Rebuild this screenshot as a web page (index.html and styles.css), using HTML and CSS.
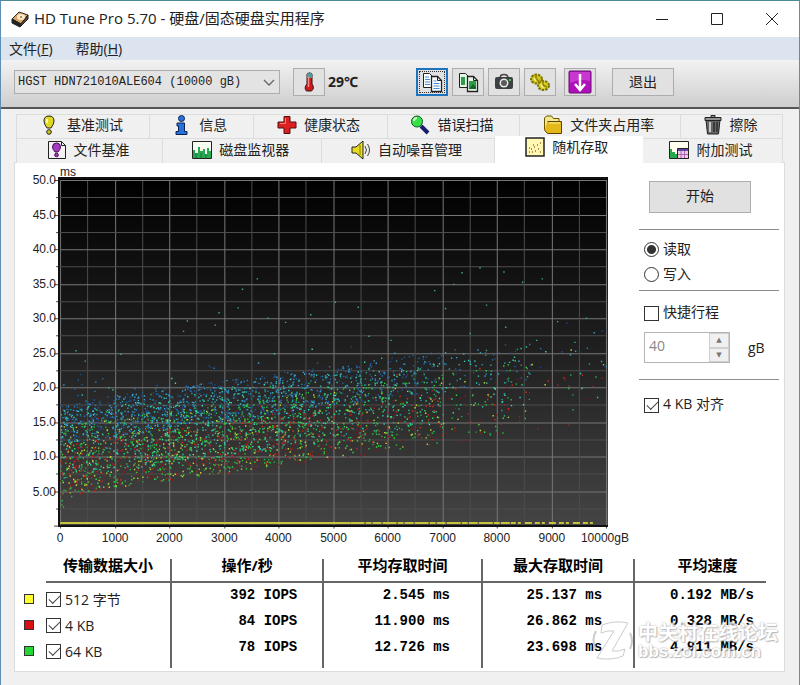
FILE: index.html
```html
<!DOCTYPE html>
<html lang="zh-CN">
<head>
    <meta charset="UTF-8">
    <meta name="viewport" content="width=device-width, initial-scale=1.0">
    <title>HD Tune Pro 5.70</title>
    <link rel="stylesheet" href="styles.css">
</head>
<body>

<div class="window">
    <header class="title-bar">
        <svg class="app-icon" viewBox="0 0 18 18" width="18" height="18">
            <path d="M1 9 8 2l9 3-7 9z" fill="#d9a868" stroke="#3a2a20"/>
            <path d="M1 9v4l8 4 1-3z" fill="#222" stroke="#222"/>
            <path d="m10 14 7-9v4l-8 8z" fill="#5b4638" stroke="#222"/>
            <ellipse cx="10" cy="7" rx="4" ry="3" fill="#fbe9c8"/>
            <circle cx="10" cy="7" r="1" fill="#b07030"/>
        </svg>
        <h1>HD Tune Pro 5.70 - 硬盘/固态硬盘实用程序</h1>
        <div class="window-buttons">
            <button aria-label="最小化"><svg viewBox="0 0 14 14" width="14" height="14"><path d="M1 7.5h12"/></svg></button>
            <button aria-label="最大化"><svg viewBox="0 0 14 14" width="14" height="14"><path d="M1.500 1.500h11v11h-11z"/></svg></button>
            <button aria-label="关闭"><svg viewBox="0 0 14 14" width="14" height="14"><path d="m1 1 12 12M13 1 1 13"/></svg></button>
        </div>
    </header>

    <nav class="menu-bar">
        <button>文件(<u>F</u>)</button>
        <button>帮助(<u>H</u>)</button>
    </nav>

    <div class="toolbar">
        <div class="drive-select">
            <select aria-label="硬盘">
                <option>HGST HDN721010ALE604 (10000 gB)</option>
            </select>
            <svg viewBox="0 0 12 8" width="12" height="8"><path d="m1 1 5 5 5-5" fill="none" stroke="#666" stroke-width="1.300"/></svg>
        </div>
        <button class="tool" aria-label="温度">
            <svg viewBox="0 0 22 22" width="22" height="22">
                <path d="M9 3q2.500-2.500 5 0v10q3 4-.5 7h-5q-3-3 .5-7z" fill="#c81c20" stroke="#3a1010"/>
                <path d="M9 3q2.500-2.500 5 0v4H9z" fill="#48a0a0"/>
                <path d="M10.500 6v10" stroke="#ff9088" stroke-width="1.500"/>
            </svg>
        </button>
        <span class="temperature">29℃</span>
        <div class="tool-group">
            <button class="tool focused" aria-label="复制文本">
                <svg viewBox="0 0 22 22" width="22" height="22">
                    <path d="M2.500 2.500h6l3 3v11h-9z" fill="#fff" stroke="#222"/>
                    <path d="M4 6h4M4 8.500h5M4 11h5M4 13.500h5" stroke="#3b8de0"/>
                    <path d="M10.500 5.500h6l4 4v11h-10z" fill="#fff" stroke="#222" stroke-width="1.300"/>
                    <path d="M16.500 5.500v4h4" fill="none" stroke="#222"/>
                    <path d="M12.500 10h3M12.500 12.500h6M12.500 15h6M12.500 17.500h6" stroke="#3b8de0"/>
                </svg>
            </button>
            <button class="tool" aria-label="复制图像">
                <svg viewBox="0 0 22 22" width="22" height="22">
                    <path d="M2.500 2.500h6l3 3v11h-9z" fill="#e8f6e8" stroke="#222"/>
                    <path d="M4 6h4v8H4z" fill="#2f9c48"/>
                    <path d="M10.500 5.500h6l4 4v11h-10z" fill="#e8f6e8" stroke="#222" stroke-width="1.300"/>
                    <path d="M16.500 5.500v4h4" fill="none" stroke="#222"/>
                    <path d="M12 10h7v8h-7z" fill="#2f9c48"/>
                    <path d="m12 18 4-5 3 3v2z" fill="#17632a"/>
                </svg>
            </button>
            <button class="tool" aria-label="截图">
                <svg viewBox="0 0 22 22" width="22" height="22">
                    <path d="M7 7q0-3.500 4-3.500T15 7" fill="none" stroke="#444" stroke-width="1.500"/>
                    <rect x="2" y="6" width="18" height="12" rx="2" fill="#3d4040"/>
                    <circle cx="11" cy="12" r="4.500" fill="#e8e8e8"/>
                    <circle cx="11" cy="12" r="3" fill="#565b5b"/>
                    <path d="M16 8h2v2h-2z" fill="#42c060"/>
                </svg>
            </button>
            <button class="tool" aria-label="选项">
                <svg viewBox="0 0 22 22" width="22" height="22">
                    <ellipse cx="7.500" cy="8" rx="5.500" ry="4.500" fill="#cfc41c" stroke="#7d7400" stroke-width="2" stroke-dasharray="2.500 1"/>
                    <ellipse cx="14.500" cy="14.500" rx="5.500" ry="4.500" fill="#d8ce28" stroke="#7d7400" stroke-width="2" stroke-dasharray="2.500 1"/>
                    <path d="M7 3v5l4 3M14 9v5l4 2" fill="none" stroke="#8c8200" stroke-width="1.500"/>
                    <path d="m5 7 2 3M12 13l2 4" stroke="#f4f090" stroke-width="1.500"/>
                </svg>
            </button>
        </div>
        <button class="tool" aria-label="保存">
            <svg viewBox="0 0 24 24" width="24" height="24">
                <rect x="1" y="1" width="22" height="22" rx="1" fill="#b010bc" stroke="#64106c"/>
                <path d="M2 2h20v9Q12 8 2 13z" fill="#c838d0"/>
                <path d="M12 4v14M7 14l5 6 5-6" fill="none" stroke="#fff" stroke-width="2.500"/>
            </svg>
        </button>
        <button class="exit">退出</button>
    </div>

    <main>
        <div class="tabs tabs-back">
            <button>
                <svg viewBox="0 0 20 20" width="20" height="20">
                    <path d="M9 1q5 0 5 5 0 3-3 7H7Q4 9 4 6q0-5 5-5z" fill="#e0d820" stroke="#222"/>
                    <path d="M7 4v4" stroke="#fffcb0" stroke-width="2"/>
                    <circle cx="9" cy="17" r="2.300" fill="#d0c818" stroke="#222"/>
                </svg>
                基准测试
            </button>
            <button>
                <svg viewBox="0 0 20 20" width="20" height="20">
                    <circle cx="9.500" cy="3.500" r="3" fill="#2474dc" stroke="#102050"/>
                    <path d="M5 8h7.500v8.500H15v3H4v-3h2.500V11H5z" fill="#2474dc" stroke="#102050"/>
                </svg>
                信息
            </button>
            <button>
                <svg viewBox="0 0 20 20" width="20" height="20">
                    <path d="M7 1.500h6V7h6v6h-6v5.500H7V13H1V7h6z" fill="#dc2020" stroke="#501010"/>
                    <path d="M8.500 3v5.500H3" fill="none" stroke="#ff8080"/>
                </svg>
                健康状态
            </button>
            <button>
                <svg viewBox="0 0 20 20" width="20" height="20">
                    <path d="m11 11 7 7" stroke="#14206c" stroke-width="4"/>
                    <circle cx="7" cy="6.500" r="5.500" fill="#38e048" stroke="#0c5c20"/>
                    <path d="M4 6q0-3 3-3" fill="none" stroke="#c8ffc8" stroke-width="2"/>
                </svg>
                错误扫描
            </button>
            <button>
                <svg viewBox="0 0 20 20" width="20" height="20">
                    <path d="M1.500 15V3l2-2h5l2 2.500H16V7" fill="#f4e890" stroke="#6c5400"/>
                    <path d="M4.500 6.500h14v12h-14l-3-3.500" fill="#e4b818" stroke="#5c4400"/>
                    <path d="M6 8h11" stroke="#fff0a0"/>
                </svg>
                文件夹占用率
            </button>
            <button>
                <svg viewBox="0 0 20 20" width="20" height="20">
                    <path d="M3 5h14l-1.500 14h-11z" fill="#686868" stroke="#222"/>
                    <path d="M2 2.500h16v3H2zM8 2V.5h4V2" fill="#909090" stroke="#222"/>
                    <path d="M7 7v10" stroke="#c8c8c8" stroke-width="2"/>
                    <path d="M11 7v10M14 7v10" stroke="#2c2c2c" stroke-width="1.500"/>
                </svg>
                擦除
            </button>
        </div>
        <div class="tabs tabs-front">
            <button>
                <svg viewBox="0 0 20 20" width="20" height="20">
                    <path d="M1.500 1.500h13l4 4v13h-17z" fill="#f4f0f4" stroke="#222"/>
                    <path d="M14.500 1.500v4h4" fill="none" stroke="#222"/>
                    <path d="M9.500 3q4 0 4 4 0 2-2.500 5H8Q5.500 9 5.500 7q0-4 4-4z" fill="#a838c0" stroke="#40104c"/>
                    <circle cx="9.500" cy="15" r="1.800" fill="#a838c0" stroke="#40104c"/>
                </svg>
                文件基准
            </button>
            <button>
                <svg viewBox="0 0 20 20" width="20" height="20">
                    <path d="M.5 1.500h19v17H.5z" fill="#f8fff0" stroke="#222"/>
                    <path d="M1 18v-8h2v3h3V7h2v4h3V9h2v5h2V8h2v3h2v7z" fill="#28a850"/>
                    <path d="M4 18v-5M9 18v-5M14 18v-4" stroke="#107838"/>
                </svg>
                磁盘监视器
            </button>
            <button>
                <svg viewBox="0 0 20 20" width="20" height="20">
                    <path d="M1 7h4l7-6v18l-7-6H1z" fill="#e8dc20" stroke="#222"/>
                    <path d="M9 5v10" stroke="#8c8000"/>
                    <path d="M14 6q3 4 0 8M16.500 4q4 6 0 12" fill="none" stroke="#444"/>
                </svg>
                自动噪音管理
            </button>
            <button class="active">
                <svg viewBox="0 0 20 20" width="20" height="20">
                    <path d="M1 1h18v18H1z" fill="#fff8b4" stroke="#222" stroke-width="1.500"/>
                    <path d="M4 15h1m1-3h1m0 3h1m1-5h1m0 4h1m1-6h1m0 4h1m1-6h1m-1 9h1M4 11h1m3-3h1" stroke="#a06820" stroke-width="1.500"/>
                </svg>
                随机存取
            </button>
            <button>
                <svg viewBox="0 0 20 20" width="20" height="20">
                    <path d="M.5 1.500h19v17H.5z" fill="#fffff0" stroke="#222"/>
                    <path d="M1 18V9h2v3h3v2h2v4z" fill="#28a850"/>
                    <path d="M8.500 8.500h11v10h-11z" fill="#f0c8e8" stroke="#222"/>
                    <path d="M9 10h10" stroke="#6048a0" stroke-width="2"/>
                    <path d="M12 11v7M15.500 11v7M9 14.500h10" stroke="#a868b0"/>
                </svg>
                附加测试
            </button>
        </div>

        <section class="panel">
            <div class="test-area">
                <svg id="chart" class="chart" viewBox="24 165 610 382">
                    <defs>
                        <linearGradient id="plotFill" x1="0" y1="0" x2="0" y2="1">
                            <stop offset="0" stop-color="#000"/>
                            <stop offset="0.500" stop-color="#202020"/>
                            <stop offset="1" stop-color="#444"/>
                        </linearGradient>
                    </defs>
                    <rect x="58" y="177" width="549" height="349" fill="url(#plotFill)"/>
                    <g id="grid"></g>
                    <g id="points"></g>
                    <path d="M60 522.500H350" stroke="#c6c23a" stroke-width="2"/>
                    <path d="M350 522.500H510" stroke="#c6c23a" stroke-width="2" stroke-dasharray="14 1 6 1 9 1"/>
                    <path d="M510 522.500H592" stroke="#c6c23a" stroke-width="2" stroke-dasharray="5 2 3 4 7 3"/>
                    <path d="M59 177v349M58 525.500h549M58 178h549" stroke="#111" stroke-width="2"/>
                    <text x="60" y="176">ms</text>
                </svg>

                <aside class="options">
                    <div class="start-row">
                        <button class="start">开始</button>
                    </div>
                    <div class="mode">
                        <label><input type="radio" name="mode" checked>读取</label>
                        <label><input type="radio" name="mode">写入</label>
                    </div>
                    <div class="stroke">
                        <label><input type="checkbox">快捷行程</label>
                        <div class="stroke-size">
                            <div class="spinner">
                                <input type="text" id="strokeSize" value="40" disabled>
                                <div class="arrows">
                                    <button aria-label="增加" disabled>▲</button>
                                    <button aria-label="减少" disabled>▼</button>
                                </div>
                            </div>
                            <label for="strokeSize">gB</label>
                        </div>
                    </div>
                    <div class="align">
                        <label><input type="checkbox" checked>4 KB 对齐</label>
                    </div>
                </aside>
            </div>

            <table class="results">
                <colgroup>
                    <col class="col-key">
                    <col class="col-size">
                    <col class="col-ops">
                    <col class="col-avg">
                    <col class="col-max">
                    <col>
                </colgroup>
                <thead>
                    <tr>
                        <td></td>
                        <th>传输数据大小</th>
                        <th>操作/秒</th>
                        <th>平均存取时间</th>
                        <th>最大存取时间</th>
                        <th>平均速度</th>
                    </tr>
                </thead>
                <tbody>
                    <tr>
                        <td><span class="key yellow"></span></td>
                        <td><label><input type="checkbox" checked>512 字节</label></td>
                        <td>392 IOPS</td>
                        <td>2.545 ms</td>
                        <td>25.137 ms</td>
                        <td>0.192 MB/s</td>
                    </tr>
                    <tr>
                        <td><span class="key red"></span></td>
                        <td><label><input type="checkbox" checked>4 KB</label></td>
                        <td>84 IOPS</td>
                        <td>11.900 ms</td>
                        <td>26.862 ms</td>
                        <td>0.328 MB/s</td>
                    </tr>
                    <tr>
                        <td><span class="key green"></span></td>
                        <td><label><input type="checkbox" checked>64 KB</label></td>
                        <td>78 IOPS</td>
                        <td>12.726 ms</td>
                        <td>23.698 ms</td>
                        <td>4.911 MB/s</td>
                    </tr>
                </tbody>
            </table>

            <div class="watermark">
                <svg viewBox="0 0 42 42" width="42" height="42">
                    <path d="M10 5q13-5 26-2L20 31q7 1 13-2l-2 7q-12 5-26 2l17-27q-7-1-13 2z" fill="#fff" stroke="#bbb"/>
                    <path d="M4 11q-5 9 0 18M38 13q4 8 0 16" fill="none" stroke="#bbb" stroke-width="2"/>
                </svg>
                <div>
                    <p class="forum">中关村在线论坛</p>
                    <p class="site">bbs.zol.com.cn</p>
                </div>
            </div>
        </section>
    </main>
</div>

<script src="chart.js"></script>
</body>
</html>
```
FILE: styles.css
```css
* {
    box-sizing: border-box;
}

body {
    margin: 0;
    font-family: "Open Sans", "Noto Sans CJK SC", sans-serif;
    font-size: 14px;
    line-height: 18px;
    color: #222;
}

button, input, select {
    font: inherit;
    color: inherit;
    margin: 0;
}

.window {
    min-height: 100vh;
    display: flex;
    flex-direction: column;
    background-color: #f0f0f0;
    border: 1px solid #5b8fb8;
    border-top-color: #4d8c94;
    border-bottom-color: #a0a0a0;
}

/* Title bar */
.title-bar {
    display: flex;
    align-items: center;
    height: 36px;
    padding-left: 10px;
    background-color: #fff;
}

.title-bar h1 {
    flex: 1;
    margin: 0 0 0 5px;
    padding-bottom: 2px;
    font-size: 15px;
    font-weight: normal;
    white-space: nowrap;
}

.window-buttons {
    display: flex;
}

.window-buttons button {
    width: 55px;
    height: 34px;
    padding: 0;
    border: none;
    background: none;
}

.window-buttons svg {
    display: block;
    margin: 0 auto;
    fill: none;
    stroke: #222;
}

/* Menu */
.menu-bar {
    display: flex;
    gap: 23px;
    height: 23px;
    padding-left: 8px;
    background-color: #dce4ef;
}

.menu-bar button {
    padding: 0;
    border: none;
    background: none;
    line-height: 22px;
}

/* Toolbar */
.toolbar {
    display: flex;
    align-items: center;
    height: 49px;
    padding: 0 13px 3px;
    background: linear-gradient(#f2f2f2, #cecece);
    border-bottom: 2px solid #555;
}

.drive-select {
    position: relative;
    width: 266px;
    margin-right: 13px;
}

.drive-select select {
    appearance: none;
    display: block;
    width: 100%;
    height: 24px;
    padding: 0 3px;
    border: 1px solid #adadad;
    border-radius: 0;
    background-color: #e3e3e3;
    font-family: "Liberation Mono", monospace;
    font-size: 12px;
}

.drive-select svg {
    position: absolute;
    right: 5px;
    top: 9px;
    pointer-events: none;
}

.tool, .exit, .start {
    border: 1px solid #adadad;
    background-color: #e1e1e1;
}

.tool {
    display: flex;
    align-items: center;
    justify-content: center;
    width: 32px;
    height: 28px;
    padding: 0;
}

.tool.focused {
    border: 2px solid #1e74bc;
    outline: 1px dotted #333;
    outline-offset: -4px;
}

.temperature {
    width: 91px;
    padding-left: 3px;
    font-family: "Noto Sans", "Noto Sans CJK SC", sans-serif;
    font-weight: bold;
}

.tool-group {
    display: flex;
    gap: 4px;
    margin-right: 8px;
}

.exit {
    width: 62px;
    height: 28px;
    margin-left: 16px;
    padding: 0;
}

/* Tabs */
main {
    flex: 1;
    padding: 5px 14px 13px 13px;
}

.tabs {
    display: grid;
    height: 24px;
    margin: 0 2px;
    border-left: 1px solid #dcdcdc;
}

.tabs-back {
    grid-template-columns: 133fr 104fr 134fr 133fr 161fr 102fr;
}

.tabs-front {
    position: relative;
    z-index: 1;
    grid-template-columns: 146fr 159fr 172fr 148fr 140fr;
}

.tabs button {
    display: flex;
    align-items: center;
    justify-content: center;
    gap: 7px;
    padding: 0 3px 3px 0;
    border: 1px solid #dcdcdc;
    border-width: 1px 1px 0 0;
    background-color: #f0f0f0;
    white-space: nowrap;
}

.tabs .active {
    height: 27px;
    margin-top: -2px;
    padding-bottom: 6px;
    border-color: #fff;
    background-color: #fff;
}

/* Panel */
.panel {
    position: relative;
    padding: 2px 18px 3px 9px;
    border: 1px solid #dcdcdc;
    background-color: #fff;
}

.test-area {
    display: flex;
    gap: 4px;
    margin-right: -13px;
}

.chart {
    flex: 1;
    min-width: 0;
    font-family: "Liberation Sans", Arial, sans-serif;
    font-size: 12px;
    fill: #222;
}

.options {
    width: 140px;
}

.options > div + div {
    border-top: 1px solid #8c8c8c;
}

.start-row {
    height: 64px;
    padding: 16px 0 0 10px;
}

.start {
    width: 102px;
    height: 32px;
    padding: 0 0 2px;
}

.options label, .results label {
    display: flex;
    align-items: center;
    gap: 4px;
    white-space: nowrap;
}

.options label input {
    margin-top: 2px;
}

.mode {
    height: 61px;
    padding: 6px 0 0 5px;
}

.mode label {
    height: 25px;
}

.stroke {
    height: 89px;
    padding: 11px 0 0 5px;
}

.stroke > label {
    height: 20px;
}

.stroke-size {
    display: flex;
    align-items: center;
    gap: 18px;
    margin-top: 10px;
}

.spinner {
    display: flex;
    width: 86px;
    height: 31px;
    border: 1px solid #b4b4b4;
}

.spinner input {
    flex: 1;
    min-width: 0;
    padding: 0 0 4px 4px;
    border: none;
    background-color: #fff;
    color: #888;
}

.arrows {
    display: grid;
    width: 20px;
}

.arrows button {
    padding: 0;
    border: 1px solid #d0d0d0;
    background-color: #f0f0f0;
    color: #777;
    font-family: "DejaVu Sans", sans-serif;
    font-size: 7px;
    line-height: 12px;
}

.align {
    padding: 15px 0 0 5px;
}

input[type="checkbox"], input[type="radio"] {
    appearance: none;
    flex: none;
    width: 15px;
    height: 15px;
    border: 1px solid #333;
    background-color: #fff;
}

input[type="radio"] {
    border-radius: 50%;
}

input[type="radio"]:checked {
    background: radial-gradient(circle, #333 4px, #fff 5px);
}

input[type="checkbox"]:checked::before {
    content: "";
    display: block;
    width: 10px;
    height: 5px;
    margin: 2px 0 0 2px;
    border: solid #444;
    border-width: 0 0 1px 1px;
    transform: rotate(-45deg);
}

/* Results table */
.results {
    width: 100%;
    margin-top: 11px;
    table-layout: fixed;
    border-collapse: separate;
    border-spacing: 0;
}

.col-key {
    width: 22px;
}

.col-size {
    width: 17%;
}

.col-ops, .col-max {
    width: 20.5%;
}

.col-avg {
    width: 21.4%;
}

.results th, .results td {
    padding: 0;
    vertical-align: top;
}

.results th {
    height: 24px;
    border-bottom: 2px solid #666;
    font-size: 15px;
    line-height: 12px;
    color: #000;
    white-space: nowrap;
}

.results th:last-child {
    padding-left: 14px;
}

.results th:nth-child(n+2):nth-child(-n+5),
.results tbody td:nth-child(n+2):nth-child(-n+5) {
    border-right: 2px solid #666;
}

.results tbody td {
    height: 26px;
    padding-top: 7px;
    line-height: 19px;
}

.results label {
    height: 19px;
}

.results tbody td:nth-child(n+3) {
    padding: 3px 31px 0 0;
    font-family: "Liberation Mono", monospace;
    font-weight: bold;
    text-align: right;
    color: #000;
}

.results tbody td:nth-child(3) {
    padding-right: 25px;
}

.results tbody td:last-child {
    padding-right: 12px;
}

.results tbody tr:last-child td {
    height: 33px;
}

.key {
    display: block;
    width: 10px;
    height: 10px;
    margin-top: 4px;
    border: 1px solid #333;
}

.yellow {
    background-color: #ffff30;
}

.red {
    background-color: #d81010;
}

.green {
    background-color: #20d830;
}

/* Forum mark in the corner */
.watermark {
    position: absolute;
    right: 6px;
    bottom: 9px;
    display: flex;
    align-items: center;
    gap: 4px;
    color: #fff;
    text-shadow: 0 0 2px #888, 1px 1px 1px #aaa;
    opacity: 0.75;
    pointer-events: none;
}

.watermark p {
    margin: 0;
    font-weight: bold;
    white-space: nowrap;
}

.forum {
    font-size: 20px;
    line-height: 21px;
}

.site {
    font-family: "Liberation Sans", Arial, sans-serif;
    font-size: 17px;
    line-height: 17px;
}
```
FILE: chart.js
```javascript
const SVG = 'http://www.w3.org/2000/svg';
const grid = document.getElementById('grid');
const points = document.getElementById('points');

// x in thousands of gB, y in ms
const px = x => 60 + x * 54.5;
const py = y => 525 - y * 6.9;

function add(parent, tag, attrs, text) {
    const el = document.createElementNS(SVG, tag);
    for (const key in attrs) {
        el.setAttribute(key, attrs[key]);
    }
    if (text) {
        el.textContent = text;
    }
    parent.appendChild(el);
}

// Grid lines and axis labels
for (let i = 0; i <= 20; i++) {
    const major = i % 2 === 0;
    const x = Math.round(px(i / 2));
    const y = Math.round(py(i * 2.5));
    const color = major ? '#777' : '#4c4c4c';
    add(grid, 'path', { d: `M${x + 0.5} 180V526`, stroke: color });
    add(grid, 'path', { d: `M60 ${y + 0.5}H606`, stroke: color });
    add(grid, 'path', { d: `M${major ? 54 : 56} ${y + 0.5}h4`, stroke: '#444' });
    if (major) {
        add(grid, 'path', { d: `M${x + 0.5} 525v3`, stroke: '#444' });
        const label = i === 20 ? '10000gB' : String(i * 500);
        add(grid, 'text', { x: i === 20 ? 604 : x, y: 541, 'text-anchor': 'middle' }, label);
        if (i > 0) {
            const ms = i * 2.5;
            add(grid, 'text', { x: 56, y: y + 4, 'text-anchor': 'end' }, ms < 10 ? ms.toFixed(2) : ms.toFixed(1));
        }
    }
}

// Fixed seed, so the cloud is the same on each load
let seed = 7;
function random() {
    seed = (seed * 16807) % 2147483647;
    return seed / 2147483647;
}

const paths = {};
function dot(x, y, color) {
    paths[color] = (paths[color] || '') + `M${px(x).toFixed(1)} ${py(y).toFixed(1)}h1.4`;
}

function density(x) {
    if (x < 3) return 1;
    if (x < 7) return 1 - (x - 3) * 0.15;
    if (x < 8.6) return 0.2;
    return 0.04;
}

const series = [
    { count: 1500, from: 0, spread: 8, colors: ['#8c1c1c', '#a82420', '#781818', '#d02c20'] },
    { count: 1900, from: 0.2, spread: 10, colors: ['#20c038', '#30d840', '#b8d838', '#28a848'] },
    { count: 1500, from: 2.5, spread: 10, colors: ['#2cc8a0', '#38d8b8', '#2ca0a0'] },
    { count: 1700, from: 7.5, spread: 6, colors: ['#205c9c', '#2878c0', '#38a0d0', '#1c4884'] }
];

series.forEach(s => {
    for (let i = 0; i < s.count; i++) {
        const x = random() * 10;
        if (random() > density(x)) continue;
        const low = 4.2 + x * 1.08;
        let y = low + s.from + s.spread * random();
        if (random() < 0.05) y += random() * 5;
        dot(x, y, s.colors[Math.floor(random() * s.colors.length)]);
    }
});

// Slow accesses above the cloud
[[0.28, 25.3], [0.45, 23.8], [1.1, 24.8], [2.25, 28.1], [2.32, 29.6], [2.83, 29], [2.9, 30.8],
 [3.25, 31.5], [3.33, 34.2], [3.6, 35.7], [3.8, 30], [4.12, 29.4], [4.58, 30.5], [5.03, 32.3],
 [5.45, 31.6], [5.65, 27.4], [6.05, 26.8], [6.85, 34], [7.05, 31.4], [7.2, 34.9], [7.35, 36.6],
 [7.68, 37.3], [7.8, 31.9], [7.5, 27.8], [8.12, 36.7], [8.15, 28.7], [8.46, 35.2], [8.82, 35.7],
 [8.72, 26.8], [9.1, 29.5], [9.42, 26.5], [9.63, 30]].forEach(p => dot(p[0], p[1], '#38b090'));
[[0.02, 3], [0.03, 3.6], [0.05, 2.7], [0.2, 4.2]].forEach(p => dot(p[0], p[1], '#20c038'));
dot(9.35, 25.4, '#e8c020');

for (const color in paths) {
    add(points, 'path', { d: paths[color], stroke: color, 'stroke-width': 1.4 });
}
```
